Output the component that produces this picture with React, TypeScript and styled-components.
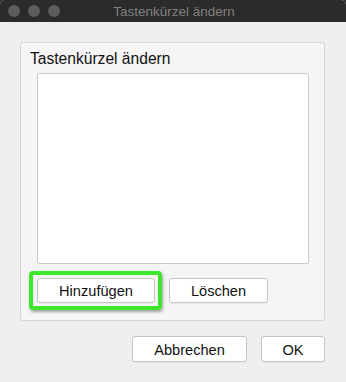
import styled, { createGlobalStyle } from 'styled-components';

const GlobalStyle = createGlobalStyle`
  html, body {
    margin: 0;
    padding: 0;
    background: #2d2d2d;
  }
  body {
    font-family: "Liberation Sans", Arial, sans-serif;
  }
`;

const Window = styled.div`
  width: 346px;
  height: 382px;
  background: #efefef;
  border-radius: 5px 5px 0 0;
  overflow: hidden;
  display: flex;
  flex-direction: column;
`;

const TitleBar = styled.div`
  height: 22px;
  background: #2b2b2b;
  position: relative;
  display: flex;
  align-items: center;
  justify-content: center;
  flex-shrink: 0;
`;

const Lights = styled.div`
  position: absolute;
  left: 8px;
  top: 5px;
  display: flex;
  gap: 8px;
`;

const Light = styled.span`
  width: 12px;
  height: 12px;
  border-radius: 50%;
  background: #5c5c5c;
`;

const Title = styled.div`
  color: #818181;
  font-size: 13.5px;
  margin-left: 2px;
  margin-top: 1px;
`;

const Body = styled.div`
  flex: 1;
  padding: 20px 21px 0 20px;
  display: flex;
  flex-direction: column;
`;

const GroupBox = styled.div`
  height: 279px;
  box-sizing: border-box;
  background: #f5f5f5;
  border: 1px solid #d6d6d6;
  border-radius: 3px;
  padding: 7px 15px 0 16px;
  display: flex;
  flex-direction: column;
`;

const GroupTitle = styled.div`
  color: #111;
  font-size: 15.6px;
  height: 23px;
  margin-left: -7px;
`;

const ListBox = styled.div`
  height: 191px;
  box-sizing: border-box;
  background: #fff;
  border: 1px solid #cbcbcb;
  border-radius: 2px;
`;

const ButtonRow = styled.div`
  display: flex;
  align-items: center;
  margin-top: 7px;
  margin-left: -8px;
  gap: 7px;
`;

const FocusRing = styled.div`
  border: 4px solid #3de62b;
  border-radius: 4px;
  padding: 3px 3px 3px 4px;
  box-shadow: 1px 2px 3px rgba(0, 0, 0, 0.35);
  display: flex;
`;

const Button = styled.button<{ $w: number; $h?: number }>`
  width: ${(p) => p.$w}px;
  height: ${(p) => p.$h ?? 25}px;
  box-sizing: border-box;
  background: #ffffff;
  border: 1px solid #c6c6c6;
  border-radius: 3px;
  font-family: "Liberation Sans", Arial, sans-serif;
  font-size: 14.6px;
  color: #111;
  padding: 1px 0 0;
  box-shadow: 0 1px 0 rgba(0, 0, 0, 0.04);
`;

const Footer = styled.div`
  display: flex;
  justify-content: flex-end;
  gap: 14px;
  margin-top: 15px;
`;

export default function App() {
  return (
    <>
      <GlobalStyle />
      <Window>
        <TitleBar>
          <Lights>
            <Light />
            <Light />
            <Light />
          </Lights>
          <Title>Tastenkürzel ändern</Title>
        </TitleBar>
        <Body>
          <GroupBox>
            <GroupTitle>Tastenkürzel ändern</GroupTitle>
            <ListBox />
            <ButtonRow>
              <FocusRing>
                <Button $w={118}>Hinzufügen</Button>
              </FocusRing>
              <Button $w={99}>Löschen</Button>
            </ButtonRow>
          </GroupBox>
          <Footer>
            <Button $w={115} $h={26}>Abbrechen</Button>
            <Button $w={64} $h={26}>OK</Button>
          </Footer>
        </Body>
      </Window>
    </>
  );
}
